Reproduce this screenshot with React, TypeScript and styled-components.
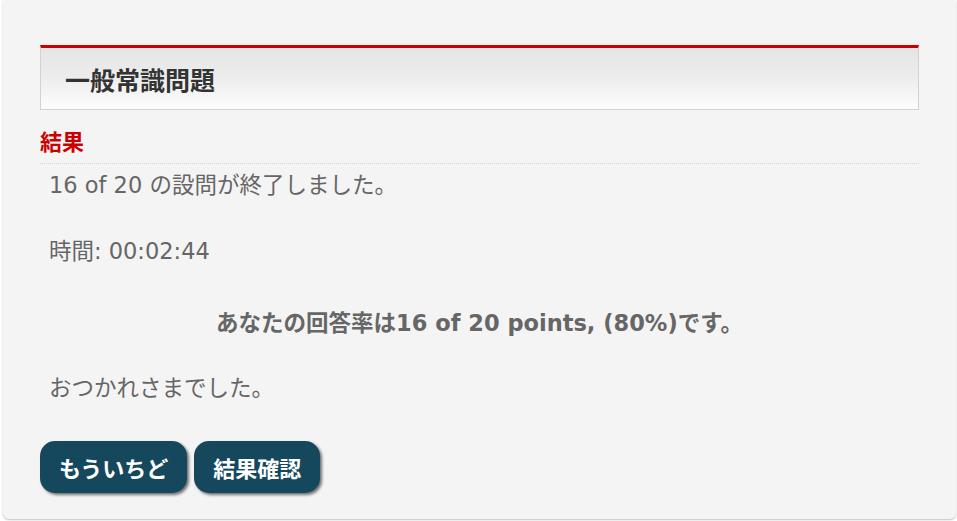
import React from "react";
import styled, { createGlobalStyle } from "styled-components";

const GlobalStyle = createGlobalStyle`
  html, body {
    margin: 0;
    padding: 0;
    background: #ffffff;
  }
  body {
    font-family: "DejaVu Sans", "Noto Sans CJK JP", sans-serif;
  }
`;

const Page = styled.div`
  width: 957px;
  height: 521px;
  overflow: hidden;
  padding-left: 3px;
  box-sizing: border-box;
`;

const Panel = styled.div`
  width: 953px;
  height: 519px;
  box-sizing: border-box;
  background: #f4f4f4;
  border-radius: 0 0 6px 6px;
  box-shadow: 0 1px 2px rgba(0, 0, 0, 0.25);
  padding: 45px 37px 0 37px;
`;

const QuizHeader = styled.div`
  height: 65px;
  box-sizing: border-box;
  border: 1px solid #d2d2d2;
  border-top: 3px solid #cc0000;
  background: linear-gradient(to bottom, #e5e5e5 0%, #ececec 45%, #fdfdfd 100%);
  display: flex;
  align-items: center;
  padding: 0 0 0 24px;
`;

const QuizTitle = styled.h2`
  margin: 0;
  font-family: "Noto Sans CJK JP", sans-serif;
  font-size: 25px;
  font-weight: 700;
  color: #333333;
  line-height: 30px;
`;

const ResultLabel = styled.h3`
  margin: 16px 0 0 0;
  padding-bottom: 9px;
  font-family: "Noto Sans CJK JP", sans-serif;
  font-size: 22px;
  font-weight: 700;
  line-height: 28px;
  color: #cc0000;
  border-bottom: 1px dotted #d6d6d6;
`;

const Body = styled.div`
  padding: 5px 9px 0 9px;
  color: #666666;
`;

const Line = styled.p<{ $gap: number }>`
  margin: 0 0 ${(p) => p.$gap}px 0;
  font-size: 22.5px;
  line-height: 32px;
`;

const Score = styled.p`
  margin: 0 0 33px 0;
  font-size: 22.5px;
  line-height: 32px;
  font-weight: 700;
  text-align: center;
`;

const Buttons = styled.div`
  display: flex;
  gap: 7px;
`;

const ActionButton = styled.button`
  height: 52px;
  padding: 0 19px;
  border: none;
  border-radius: 15px;
  background: #15485c;
  color: #ffffff;
  font-family: "Noto Sans CJK JP", sans-serif;
  font-size: 22px;
  font-weight: 700;
  box-shadow: 2px 2px 3px rgba(0, 0, 0, 0.55);
  cursor: pointer;
`;

export default function App() {
  return (
    <>
      <GlobalStyle />
      <Page>
        <Panel>
          <QuizHeader>
            <QuizTitle>一般常識問題</QuizTitle>
          </QuizHeader>
          <ResultLabel>結果</ResultLabel>
          <Body>
            <Line $gap={34}>16 of 20 の設問が終了しました。</Line>
            <Line $gap={40}>時間: 00:02:44</Line>
            <Score>あなたの回答率は16 of 20 points, (80%)です。</Score>
            <Line $gap={37}>おつかれさまでした。</Line>
          </Body>
          <Buttons>
            <ActionButton>もういちど</ActionButton>
            <ActionButton>結果確認</ActionButton>
          </Buttons>
        </Panel>
      </Page>
    </>
  );
}
